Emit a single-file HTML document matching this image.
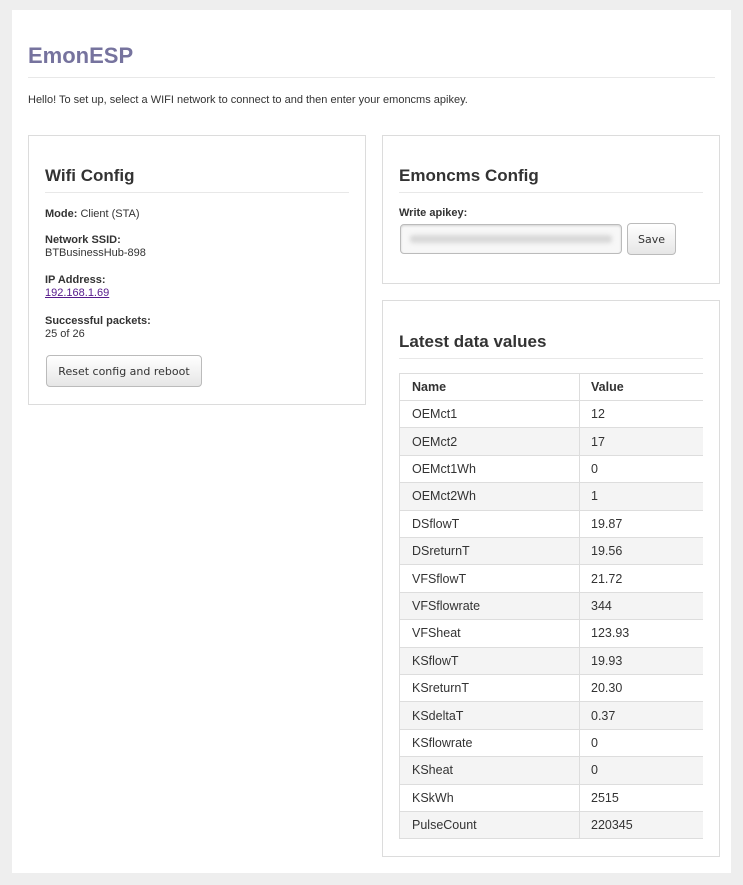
<!DOCTYPE html>
<html><head><meta charset="utf-8"><style>
*{box-sizing:border-box;margin:0;padding:0}
body{width:743px;height:885px;background:#eeeeee;font-family:"Liberation Sans",sans-serif;color:#333;position:relative;overflow:hidden}
.c{position:absolute;left:12px;top:10px;width:719px;height:863px;background:#fff}
.a{position:absolute}
h1{position:absolute;left:28px;top:43px;font-size:22px;font-weight:bold;color:#76739e}
.hr{position:absolute;height:1px;background:#e8e8e8}
.p{position:absolute;border:1px solid #dcdcdc;background:#fff}
h2{position:absolute;font-size:17px;font-weight:bold;color:#333}
.t{font-size:11px;position:absolute;line-height:13px}
.btn{position:absolute;border:1px solid #bbb;border-radius:4px;background:linear-gradient(#fff,#e6e6e6);font-family:"DejaVu Sans",sans-serif;font-size:11px;color:#333;display:flex;align-items:center;justify-content:center}
.row{position:absolute;left:399px;width:304px;height:27.4px;border-left:1px solid #ddd;border-bottom:1px solid #ddd;font-size:12.5px;display:flex;align-items:center}
.row span{display:block}
.row .n{width:180px;padding-left:12px;border-right:1px solid #ddd;height:100%;display:flex;align-items:center}
.row .v{padding-left:11px}
.s{background:#f4f4f4}
</style></head><body>
<div class="c"></div>
<h1>EmonESP</h1>
<div class="hr" style="left:28px;top:77px;width:687px"></div>
<div class="t" style="left:28px;top:94px">Hello! To set up, select a WIFI network to connect to and then enter your emoncms apikey.</div>

<div class="p" style="left:28px;top:135px;width:338px;height:270px"></div>
<h2 style="left:45px;top:166px">Wifi Config</h2>
<div class="hr" style="left:45px;top:192px;width:304px"></div>
<div class="t" style="left:45px;top:208px"><b>Mode:</b> Client (STA)</div>
<div class="t" style="left:45px;top:234px"><b>Network SSID:</b><br>BTBusinessHub-898</div>
<div class="t" style="left:45px;top:274px"><b>IP Address:</b><br><span style="color:#551a8b;text-decoration:underline">192.168.1.69</span></div>
<div class="t" style="left:45px;top:315px"><b>Successful packets:</b><br>25 of 26</div>
<div class="btn" style="left:46px;top:355px;width:156px;height:32px">Reset config and reboot</div>

<div class="p" style="left:382px;top:135px;width:338px;height:149px"></div>
<h2 style="left:399px;top:166px">Emoncms Config</h2>
<div class="hr" style="left:399px;top:192px;width:304px"></div>
<div class="t" style="left:399px;top:207px"><b>Write apikey:</b></div>
<div class="a" style="left:400px;top:224px;width:222px;height:30px;border:1px solid #bbb;border-radius:4px;box-shadow:inset 0 1px 2px rgba(0,0,0,.15);background:#f7f7f7"><div style="margin:10px 9px;height:8px;background:#d8d8d8;filter:blur(2px);border-radius:3px"></div></div>
<div class="btn" style="left:627px;top:223px;width:49px;height:32px">Save</div>

<div class="p" style="left:382px;top:300px;width:338px;height:557px"></div>
<h2 style="left:399px;top:332px">Latest data values</h2>
<div class="hr" style="left:399px;top:358px;width:304px"></div>
<div class="row" style="top:373px;border-top:1px solid #ddd;height:28px;font-weight:bold"><span class="n">Name</span><span class="v">Value</span></div>
<div class="row" style="top:401px"><span class="n">OEMct1</span><span class="v">12</span></div>
<div class="row s" style="top:428.4px"><span class="n">OEMct2</span><span class="v">17</span></div>
<div class="row" style="top:455.8px"><span class="n">OEMct1Wh</span><span class="v">0</span></div>
<div class="row s" style="top:483.2px"><span class="n">OEMct2Wh</span><span class="v">1</span></div>
<div class="row" style="top:510.6px"><span class="n">DSflowT</span><span class="v">19.87</span></div>
<div class="row s" style="top:538px"><span class="n">DSreturnT</span><span class="v">19.56</span></div>
<div class="row" style="top:565.4px"><span class="n">VFSflowT</span><span class="v">21.72</span></div>
<div class="row s" style="top:592.8px"><span class="n">VFSflowrate</span><span class="v">344</span></div>
<div class="row" style="top:620.2px"><span class="n">VFSheat</span><span class="v">123.93</span></div>
<div class="row s" style="top:647.6px"><span class="n">KSflowT</span><span class="v">19.93</span></div>
<div class="row" style="top:675px"><span class="n">KSreturnT</span><span class="v">20.30</span></div>
<div class="row s" style="top:702.4px"><span class="n">KSdeltaT</span><span class="v">0.37</span></div>
<div class="row" style="top:729.8px"><span class="n">KSflowrate</span><span class="v">0</span></div>
<div class="row s" style="top:757.2px"><span class="n">KSheat</span><span class="v">0</span></div>
<div class="row" style="top:784.6px"><span class="n">KSkWh</span><span class="v">2515</span></div>
<div class="row s" style="top:812px"><span class="n">PulseCount</span><span class="v">220345</span></div>
</body></html>
